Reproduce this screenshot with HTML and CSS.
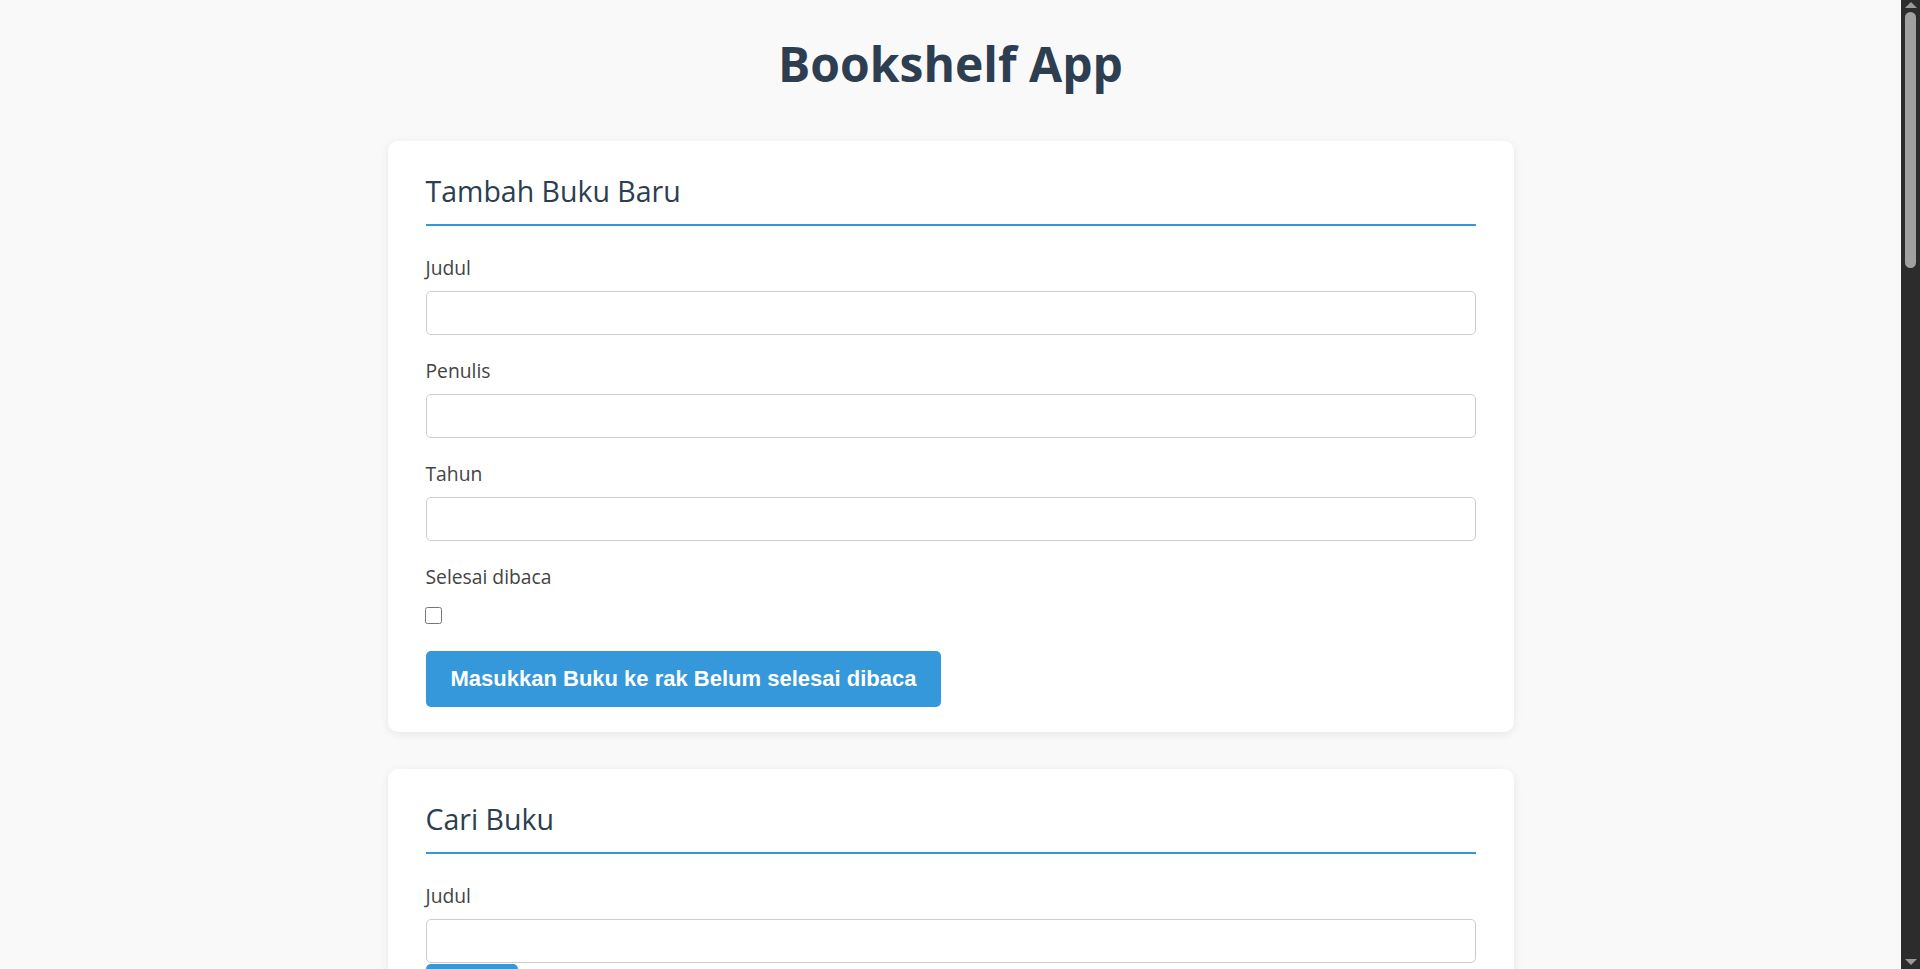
FILE: index.html
```html
<!DOCTYPE html>
<html lang="id">
<head>
<meta charset="utf-8">
<title>Bookshelf App</title>
<link rel="stylesheet" href="styles.css">
</head>
<body>
<div class="page">
  <header class="app-header">
    <h1 class="app-title">Bookshelf App</h1>
  </header>
  <main class="container">
    <section class="card">
      <h2 class="card-title">Tambah Buku Baru</h2>
      <form class="book-form">
        <div class="form-group">
          <label class="form-label" for="bookFormTitle">Judul</label>
          <input class="form-input" id="bookFormTitle" type="text">
        </div>
        <div class="form-group">
          <label class="form-label" for="bookFormAuthor">Penulis</label>
          <input class="form-input" id="bookFormAuthor" type="text">
        </div>
        <div class="form-group">
          <label class="form-label" for="bookFormYear">Tahun</label>
          <input class="form-input" id="bookFormYear" type="number">
        </div>
        <div class="form-group form-group--check">
          <label class="form-label" for="bookFormIsComplete">Selesai dibaca</label>
          <input class="form-check" id="bookFormIsComplete" type="checkbox">
        </div>
        <button class="btn" type="button">Masukkan Buku ke rak <span>Belum selesai dibaca</span></button>
      </form>
    </section>

    <section class="card">
      <h2 class="card-title">Cari Buku</h2>
      <form class="search-form">
        <label class="form-label" for="searchBookTitle">Judul</label>
        <input class="form-input" id="searchBookTitle" type="text">
        <button class="btn btn--search" type="button">Cari</button>
      </form>
    </section>

    <section class="card shelf">
      <h2 class="card-title">Belum selesai dibaca</h2>
      <div class="shelf-list"></div>
    </section>

    <section class="card shelf">
      <h2 class="card-title">Selesai dibaca</h2>
      <div class="shelf-list"></div>
    </section>
  </main>
</div>
<aside class="scrollbar" aria-hidden="true">
  <span class="scrollbar-arrow scrollbar-arrow--up"></span>
  <span class="scrollbar-thumb"></span>
  <span class="scrollbar-arrow scrollbar-arrow--down"></span>
</aside>
</body>
</html>
```

FILE: styles.css
```css
html {
  background: #f9f9f9;
}

body {
  margin: 0;
  display: flex;
  align-items: flex-start;
  background: #f9f9f9;
  font-family: "Open Sans", "Noto Sans", sans-serif;
  color: #444;
}

.page {
  flex: 1;
  min-width: 0;
}

/* browser scrollbar as seen in the screenshot */
.scrollbar {
  position: sticky;
  top: 0;
  flex: 0 0 19px;
  height: 100vh;
  box-sizing: border-box;
  display: flex;
  flex-direction: column;
  align-items: center;
  background: #2c2c2c;
}

.scrollbar-arrow {
  display: block;
  width: 0;
  height: 0;
  border-left: 6px solid transparent;
  border-right: 6px solid transparent;
}

.scrollbar-arrow--up {
  margin-top: 2px;
  border-bottom: 6px solid #9a9a9a;
}

.scrollbar-thumb {
  display: block;
  width: 11px;
  height: 256px;
  margin-top: 4px;
  border-radius: 6px;
  background: #a0a0a0;
}

.scrollbar-arrow--down {
  margin-top: auto;
  margin-bottom: 4px;
  border-top: 6px solid #9a9a9a;
}

.app-header {
  padding-top: 32px;
}

.app-title {
  margin: 0 0 45px;
  text-align: center;
  font-size: 48px;
  line-height: 64px;
  font-weight: 700;
  color: #2c3e50;
}

.container {
  width: 1126px;
  margin: 0 auto;
  padding-bottom: 40px;
}

.card {
  box-sizing: border-box;
  background: #fff;
  border-radius: 10px;
  box-shadow: 0 2px 10px rgba(0, 0, 0, 0.08);
  padding: 31px 38px 25px;
  margin-bottom: 37px;
}

.card-title {
  margin: 0 0 29px;
  padding-bottom: 14px;
  border-bottom: 2px solid #3498db;
  font-size: 28.5px;
  line-height: 38px;
  font-weight: 400;
  color: #2c3e50;
}

.form-group {
  margin-bottom: 23px;
}

.form-group--check {
  margin-bottom: 27px;
}

.form-label {
  display: block;
  margin-bottom: 10px;
  font-size: 19.3px;
  line-height: 26px;
  color: #444;
}

.form-input {
  display: block;
  box-sizing: border-box;
  width: 100%;
  height: 44px;
  margin: 0;
  padding: 8px 12px;
  border: 1px solid #ccc;
  border-radius: 5px;
  background: #fff;
  font-family: inherit;
  font-size: 16px;
}

.form-check {
  display: block;
  width: 17px;
  height: 17px;
  margin: 17px 0 0 -1px;
}

.btn {
  display: inline-block;
  padding: 15px 25px;
  border: 0;
  border-radius: 5px;
  background: #3498db;
  color: #fff;
  font-family: "Liberation Sans", Arial, sans-serif;
  font-size: 22px;
  font-weight: 700;
  line-height: 26px;
  cursor: pointer;
}

.btn--search {
  margin-top: 1px;
}

.shelf {
  min-height: 1200px;
}
```
